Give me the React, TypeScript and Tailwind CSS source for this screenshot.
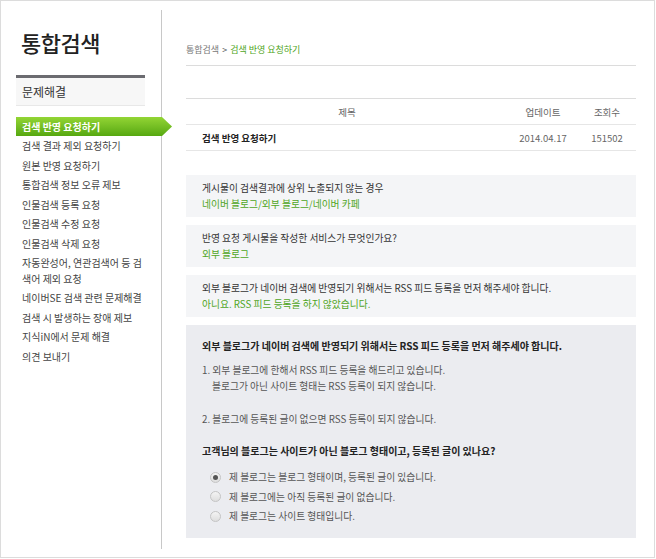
const menu = [
  "검색 결과 제외 요청하기",
  "원본 반영 요청하기",
  "통합검색 정보 오류 제보",
  "인물검색 등록 요청",
  "인물검색 수정 요청",
  "인물검색 삭제 요청",
  "자동완성어, 연관검색어 등 검색어 제외 요청",
  "네이버SE 검색 관련 문제해결",
  "검색 시 발생하는 장애 제보",
  "지식iN에서 문제 해결",
  "의견 보내기",
];

const steps = [
  { q: "게시물이 검색결과에 상위 노출되지 않는 경우", a: "네이버 블로그/외부 블로그/네이버 카페" },
  { q: "반영 요청 게시물을 작성한 서비스가 무엇인가요?", a: "외부 블로그" },
  { q: "외부 블로그가 네이버 검색에 반영되기 위해서는 RSS 피드 등록을 먼저 해주세야 합니다.", a: "아니요. RSS 피드 등록을 하지 않았습니다." },
];

const options = [
  "제 블로그는 블로그 형태이며, 등록된 글이 있습니다.",
  "제 블로그에는 아직 등록된 글이 없습니다.",
  "제 블로그는 사이트 형태입니다.",
];

function Radio({ checked }: { checked?: boolean }) {
  return (
    <span className="flex h-[11px] w-[11px] items-center justify-center rounded-full border border-[#c4c4c4] bg-gradient-to-b from-[#f4f4f4] to-[#dedede]">
      {checked && <span className="h-[5px] w-[5px] rounded-full bg-[#555]" />}
    </span>
  );
}

export default function App() {
  return (
    <div
      className="h-[559px] w-[656px] bg-white text-[#333]"
      style={{ fontFamily: '"Noto Sans CJK KR", "Noto Sans", sans-serif' }}
    >
      <div className="flex h-[558px] w-[655px] border border-[#dcdcdc] pt-[9px]">
        {/* sidebar */}
        <aside className="relative z-10 h-[539px] w-[161px] shrink-0 border-r border-[#c8c8c8] pl-[15px]">
          <h1 className="mt-[17px] pl-[5px] text-[22px] leading-[30px] font-medium tracking-[-0.5px] text-[#222]">통합검색</h1>
          <div className="mt-[18px] w-[129px] border-t-[3px] border-[#6b6b70] bg-[#f7f7f7] border-b border-b-[#e8e8e8]">
            <div className="px-[6px] text-[12px] leading-[27px] text-[#333]">문제해결</div>
          </div>
          <ul className="mt-[11px]">
            <li className="relative h-[19px] w-[146px] bg-gradient-to-b from-[#93d534] to-[#56a810] pl-[6px] text-[10px] leading-[19px] font-bold text-white">
              검색 반영 요청하기
              <span className="absolute top-0 right-[-10px] h-[19px] w-[10px] bg-gradient-to-b from-[#93d534] to-[#56a810] [clip-path:polygon(0_0,100%_50%,0_100%)]" />
            </li>
            {menu.map((m) => (
              <li key={m} className="w-[128px] py-[2px] pl-[6px] text-[10px] leading-[15.5px] text-[#444]">
                {m}
              </li>
            ))}
          </ul>
        </aside>

        {/* content */}
        <main className="ml-[24px] w-[450px]">
          <div className="mt-[32px] border-b border-[#dcdcdc] pb-[8px] text-[9px] leading-[15px]">
            <span className="text-[#777]">통합검색</span>
            <span className="mx-[3px] text-[#555]">&gt;</span>
            <span className="text-[#4fa51d]">검색 반영 요청하기</span>
          </div>

          <div className="mt-[32px] border-t border-[#dcdcdc]">
            <div className="grid h-[26px] grid-cols-[322px_70px_58px] border-b border-[#e6e6e6] text-[9.5px] leading-[26px] text-[#666]">
              <div className="text-center">제목</div>
              <div className="text-center">업데이트</div>
              <div className="text-center">조회수</div>
            </div>
            <div className="grid h-[26px] grid-cols-[322px_70px_58px] border-b border-[#e6e6e6] text-[9.5px] leading-[26px]">
              <div className="pl-[16px] font-bold text-[#222]">검색 반영 요청하기</div>
              <div className="text-center text-[#666]">2014.04.17</div>
              <div className="text-center text-[#666]">151502</div>
            </div>
          </div>

          <div className="mt-[24px] flex flex-col gap-[8px]">
            {steps.map((s) => (
              <div key={s.q} className="h-[42px] bg-[#f4f5f7] px-[16px] py-[5px] text-[9.75px] leading-[16px]">
                <div className="text-[#333]">{s.q}</div>
                <div className="text-[#4fa51d]">{s.a}</div>
              </div>
            ))}

            <div className="h-[213px] bg-[#ebecf0] px-[16px] pt-[13px] text-[9.75px]">
              <div className="text-[10px] leading-[16px] font-bold text-[#222]">
                외부 블로그가 네이버 검색에 반영되기 위해서는 RSS 피드 등록을 먼저 해주세야 합니다.
              </div>
              <div className="mt-[8px] leading-[16px] text-[#555]">
                <div>1. 외부 블로그에 한해서 RSS 피드 등록을 해드리고 있습니다.</div>
                <div className="pl-[10px]">블로그가 아닌 사이트 형태는 RSS 등록이 되지 않습니다.</div>
                <div className="mt-[17px]">2. 블로그에 등록된 글이 없으면 RSS 등록이 되지 않습니다.</div>
              </div>
              <div className="mt-[16px] text-[10px] leading-[16px] font-bold text-[#222]">
                고객님의 블로그는 사이트가 아닌 블로그 형태이고, 등록된 글이 있나요?
              </div>
              <div className="mt-[10px] flex flex-col gap-[3.5px] pl-[8px]">
                {options.map((o, i) => (
                  <label key={o} className="flex items-center gap-[8px] leading-[16px] text-[#555]">
                    <Radio checked={i === 0} />
                    <span>{o}</span>
                  </label>
                ))}
              </div>
            </div>
          </div>
        </main>
      </div>
    </div>
  );
}
